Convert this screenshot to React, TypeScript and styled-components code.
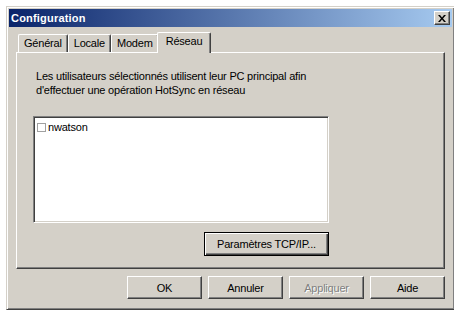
import React from 'react';
import styled, { createGlobalStyle } from 'styled-components';

const Global = createGlobalStyle`
  html, body { margin: 0; padding: 0; background: #ffffff; }
  body {
    width: 454px; height: 312px; overflow: hidden;
    font-family: "Liberation Sans", Arial, sans-serif;
    font-size: 11px; color: #000;
  }
`;

const Page = styled.div`
  padding: 6px 0 0 6px;
`;

const Window = styled.div`
  width: 449px;
  height: 304px;
  box-sizing: border-box;
  background: #d4d0c8;
  border: 1px solid;
  border-color: #d4d0c8 #404040 #404040 #d4d0c8;
  box-shadow: inset 1px 1px #ffffff, inset -1px -1px #808080;
  padding: 2px;
  display: flex;
  flex-direction: column;
`;

const TitleBar = styled.div`
  height: 18px;
  flex: none;
  display: flex;
  align-items: center;
  justify-content: space-between;
  padding: 0 2px 0 2px;
  background: linear-gradient(to right, #0a246a, #a6caf0);
`;

const Title = styled.span`
  color: #ffffff;
  font-weight: bold;
  font-size: 11px;
  letter-spacing: 0.2px;
`;

const CloseButton = styled.div`
  width: 16px;
  height: 14px;
  box-sizing: border-box;
  background: #d4d0c8;
  border: 1px solid;
  border-color: #ffffff #404040 #404040 #ffffff;
  box-shadow: inset -1px -1px #808080;
  display: flex;
  align-items: center;
  justify-content: center;
`;

const Client = styled.div`
  flex: 1;
  display: flex;
  flex-direction: column;
  padding: 5px 7px 0 7px;
`;

const TabStrip = styled.div`
  height: 20px;
  display: flex;
  align-items: flex-end;
  padding-left: 2px;
  position: relative;
  z-index: 1;
`;

const Tab = styled.div<{ $active?: boolean }>`
  box-sizing: border-box;
  height: ${p => (p.$active ? '21px' : '18px')};
  margin: ${p => (p.$active ? '0 -2px -1px -2px' : '0')};
  padding: ${p => (p.$active ? '2px 8px 0 8px' : '2px 5px 0 5px')};
  background: #d4d0c8;
  border-top: 1px solid #ffffff;
  border-left: 1px solid #ffffff;
  border-right: 1px solid #404040;
  box-shadow: inset -1px 0 #808080;
  border-radius: 2px 2px 0 0;
  letter-spacing: -0.2px;
  position: relative;
  z-index: ${p => (p.$active ? 2 : 0)};
`;

const Panel = styled.div`
  height: 217px;
  box-sizing: border-box;
  border: 1px solid;
  border-color: #ffffff #404040 #404040 #ffffff;
  box-shadow: inset -1px -1px #808080;
  padding: 16px 0 0 16px;
  display: flex;
  flex-direction: column;
  align-items: flex-start;
`;

const Description = styled.p`
  margin: 0 0 0 3px;
  line-height: 14px;
  letter-spacing: -0.2px;
`;

const ListBox = styled.div`
  margin-top: 19px;
  width: 296px;
  height: 107px;
  box-sizing: border-box;
  background: #ffffff;
  border: 1px solid;
  border-color: #808080 #ffffff #ffffff #808080;
  box-shadow: inset 1px 1px #404040, inset -1px -1px #d4d0c8;
  padding: 3px 2px;
`;

const ListItem = styled.div`
  display: flex;
  align-items: center;
  height: 14px;
  gap: 2px;
  letter-spacing: -0.2px;
`;

const CheckBox = styled.span`
  width: 9px;
  height: 9px;
  box-sizing: border-box;
  border: 1px solid #a0a0a0;
  background: #ffffff;
  margin-left: 1px;
`;

const PanelButtonRow = styled.div`
  width: 296px;
  display: flex;
  justify-content: flex-end;
  margin-top: 9px;
`;

const Button = styled.button<{ $default?: boolean; $w?: number }>`
  width: ${p => p.$w ?? 75}px;
  height: ${p => (p.$default ? 24 : 23)}px;
  box-sizing: border-box;
  font-family: "Liberation Sans", Arial, sans-serif;
  font-size: 11px;
  letter-spacing: -0.2px;
  color: #000;
  background: #d4d0c8;
  padding: 0;
  border: 1px solid;
  border-color: ${p => (p.$default ? '#000000' : '#ffffff #404040 #404040 #ffffff')};
  box-shadow: ${p =>
    p.$default
      ? 'inset 1px 1px #ffffff, inset -1px -1px #404040, inset -2px -2px #808080'
      : 'inset -1px -1px #808080'};
  &:disabled {
    color: #808080;
    text-shadow: 1px 1px #ffffff;
  }
`;

const BottomRow = styled.div`
  display: flex;
  justify-content: flex-end;
  gap: 6px;
  margin-top: 7px;
`;

export default function App() {
  return (
    <>
      <Global />
      <Page>
        <Window>
          <TitleBar>
            <Title>Configuration</Title>
            <CloseButton>
              <svg width="8" height="7" viewBox="0 0 8 7">
                <path d="M0 0h2l2 2.5L6 0h2L5 3.5 8 7H6L4 4.5 2 7H0l3-3.5z" fill="#000" />
              </svg>
            </CloseButton>
          </TitleBar>
          <Client>
            <TabStrip>
              <Tab>Général</Tab>
              <Tab>Locale</Tab>
              <Tab>Modem</Tab>
              <Tab $active>Réseau</Tab>
            </TabStrip>
            <Panel>
              <Description>
                Les utilisateurs sélectionnés utilisent leur PC principal afin
                <br />
                d'effectuer une opération HotSync en réseau
              </Description>
              <ListBox>
                <ListItem>
                  <CheckBox />
                  <span>nwatson</span>
                </ListItem>
              </ListBox>
              <PanelButtonRow>
                <Button $default $w={125}>Paramètres TCP/IP...</Button>
              </PanelButtonRow>
            </Panel>
            <BottomRow>
              <Button>OK</Button>
              <Button>Annuler</Button>
              <Button disabled>Appliquer</Button>
              <Button>Aide</Button>
            </BottomRow>
          </Client>
        </Window>
      </Page>
    </>
  );
}
